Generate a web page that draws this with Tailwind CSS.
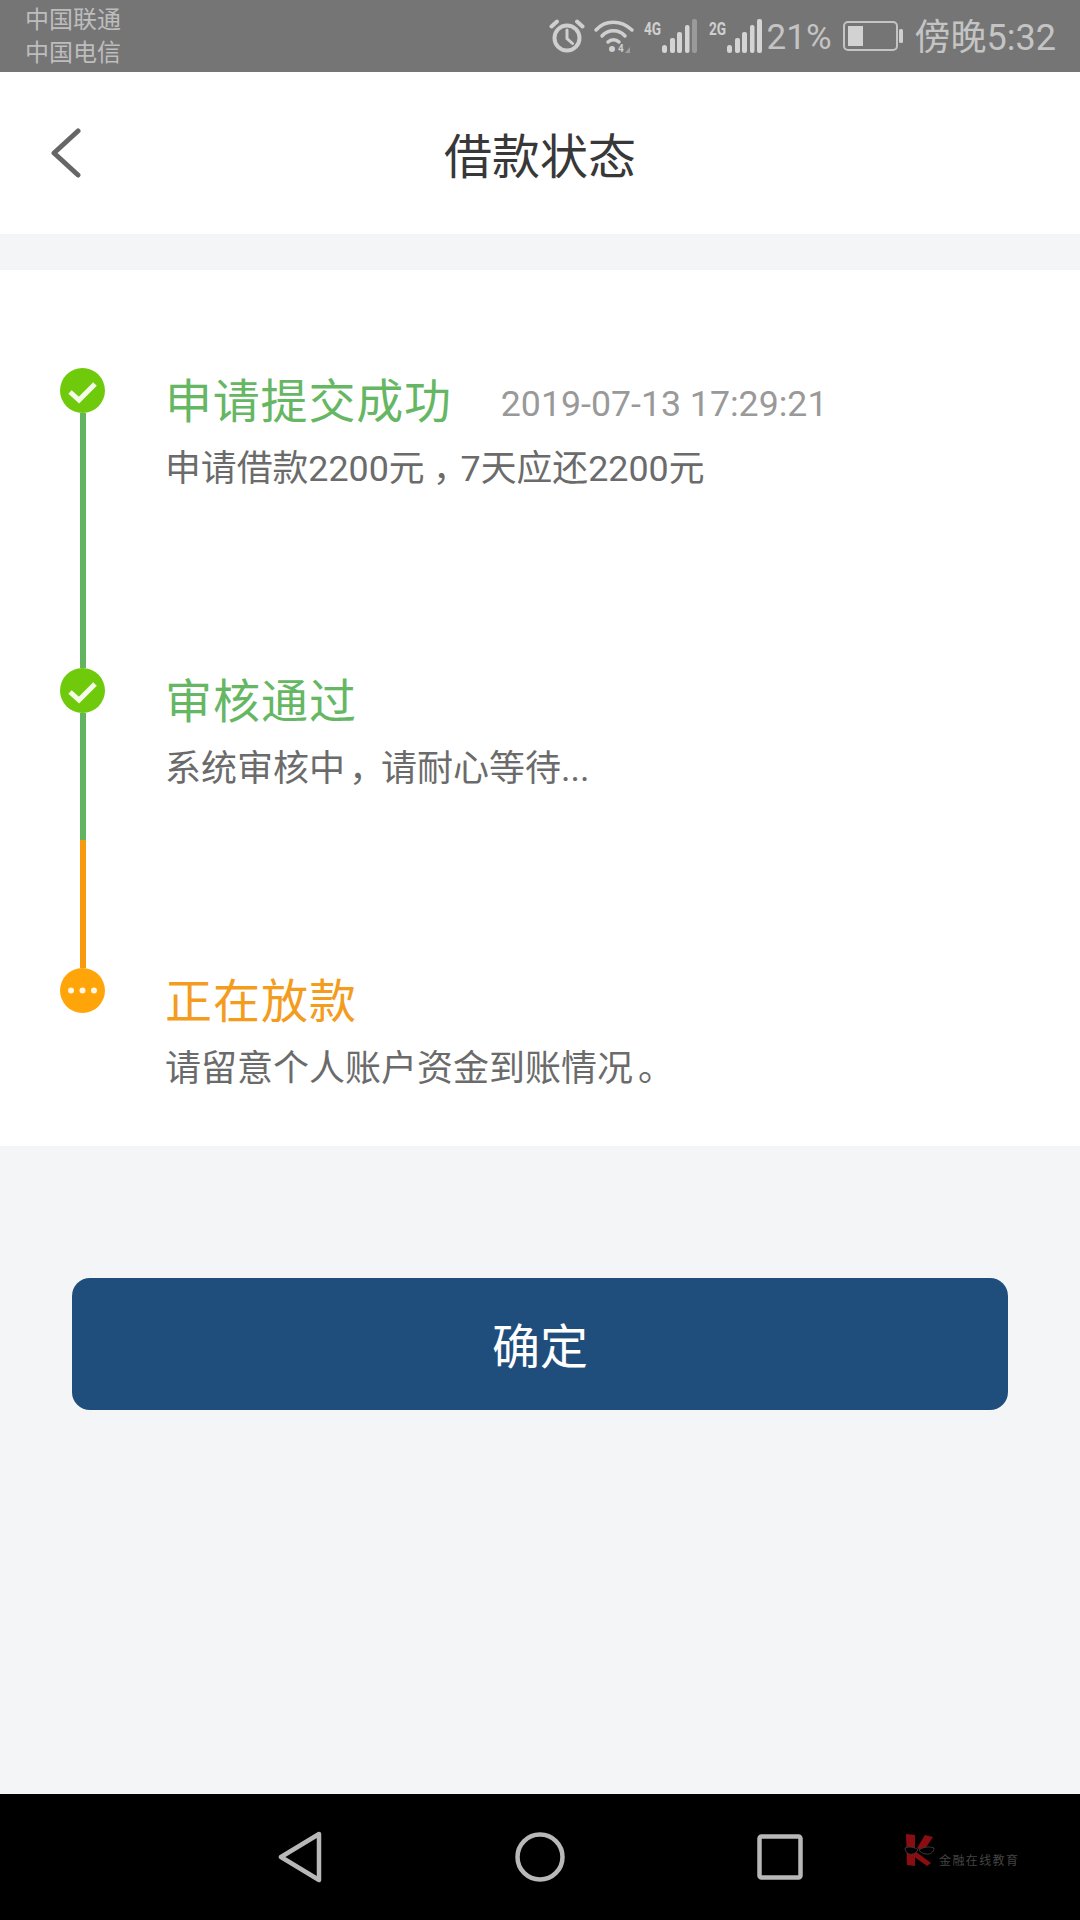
<!DOCTYPE html>
<html lang="zh-CN">
<head>
<meta charset="utf-8">
<title>借款状态</title>
<script src="https://cdn.jsdelivr.net/npm/@tailwindcss/browser@4"></script>
</head>
<body class="m-0">
<div class="w-[1080px] h-[1920px] flex flex-col bg-[#f3f5f7] overflow-hidden font-['Roboto','Noto_Sans_CJK_SC',sans-serif]">

  <!-- status bar -->
  <div class="h-[72px] shrink-0 bg-[#757575] flex justify-between text-[#c4c4c4]">
    <div class="pl-[25px] pt-[4px] text-[24px] leading-[33px] text-[#bdbdbd]">
      <div>中国联通</div>
      <div>中国电信</div>
    </div>
    <div class="flex items-center pr-[24px]">
      <svg class="w-[36px] h-[36px]" viewBox="0 0 36 36" fill="none" stroke="#cfcfcf" stroke-width="4" stroke-linecap="round">
        <circle cx="18" cy="20" r="12.5"/>
        <path d="M18 12v8.5l5.5 5" stroke-width="3"/>
        <path d="M2.5 8.5L8 3.5M33.5 8.5L28 3.5"/>
      </svg>
      <svg class="w-[40px] h-[36px] ml-[9px] overflow-visible" viewBox="0 0 40 36" fill="none" stroke="#cfcfcf" stroke-width="3.5" stroke-linecap="round">
        <path d="M2 12C11 1.500 27 1.500 38 12"/>
        <path d="M8 18C14 11 25 11 31 18"/>
        <path d="M14 24C17 21 22 21 25 24"/>
        <circle cx="18" cy="31" r="3" fill="#cfcfcf" stroke="none"/>
        <text x="24" y="34" font-size="10" font-weight="700" fill="#cfcfcf" stroke="none" font-family="Roboto">4</text>
        <path d="M31 35l5-6v6z" fill="#a0a0a0" stroke="none"/>
      </svg>
      <div class="w-[18px] ml-[10px] mb-[16px] text-[19px] leading-[19px] font-bold text-[#cfcfcf] scale-x-[0.72] origin-left whitespace-nowrap">4G</div>
      <svg class="w-[35px] h-[36px]" viewBox="0 0 35 36">
        <g fill="#d4d4d4">
          <rect x="0" y="27" width="5" height="8" rx="2.500"/>
          <rect x="8" y="20" width="5" height="15" rx="2"/>
          <rect x="15" y="14" width="5" height="21" rx="2"/>
          <rect x="23" y="7" width="4.500" height="28" rx="2"/>
        </g>
        <rect x="30" y="1" width="5" height="34" rx="2" fill="#9a9a9a"/>
      </svg>
      <div class="w-[18px] ml-[12px] mb-[16px] text-[19px] leading-[19px] font-bold text-[#cfcfcf] scale-x-[0.72] origin-left whitespace-nowrap">2G</div>
      <svg class="w-[35px] h-[36px]" viewBox="0 0 35 36" fill="#d4d4d4">
        <rect x="0" y="27" width="5" height="8" rx="2.500"/>
        <rect x="8" y="20" width="5" height="15" rx="2"/>
        <rect x="15" y="14" width="5" height="21" rx="2"/>
        <rect x="23" y="7" width="4.500" height="28" rx="2"/>
        <rect x="30" y="1" width="5" height="34" rx="2"/>
      </svg>
      <div class="ml-[5px] mt-[4px] text-[35px] leading-[40px]">21%</div>
      <svg class="w-[60px] h-[30px] ml-[11px]" viewBox="0 0 60 30" fill="none">
        <rect x="1" y="1" width="53" height="28" rx="4" stroke="#c4c4c4" stroke-width="2"/>
        <rect x="5" y="5" width="15" height="20" fill="#d2d2d2"/>
        <rect x="56" y="8" width="4" height="14" rx="1.500" fill="#cfcfcf"/>
      </svg>
      <div class="ml-[12px] mt-[4px] text-[36px] leading-[40px]">傍晚5:32</div>
    </div>
  </div>

  <!-- header -->
  <div class="h-[162px] shrink-0 bg-white relative flex items-center justify-center">
    <svg class="absolute left-[50px] top-[56px] w-[34px] h-[50px]" viewBox="0 0 34 50" fill="none" stroke="#666666" stroke-width="5" stroke-linecap="round" stroke-linejoin="round">
      <path d="M28 3L4 25L28 47"/>
    </svg>
    <div class="pt-[9px] text-[48px] leading-[56px] text-[#383838]">借款状态</div>
  </div>

  <!-- timeline card -->
  <div class="mt-[36px] h-[876px] shrink-0 bg-white pt-[98px]">
    <!-- step 1 -->
    <div class="flex h-[300px]">
      <div class="w-[165px] shrink-0 pl-[60px] flex flex-col">
        <svg class="w-[45px] h-[45px] shrink-0" viewBox="0 0 45 45">
          <circle cx="22.500" cy="22.500" r="22.500" fill="#6fca0b"/>
          <path d="M10 24l9 8L35 16" fill="none" stroke="#f4fbe8" stroke-width="5"/>
        </svg>
        <div class="w-[6px] ml-[20px] flex-1 bg-[#63b45f]"></div>
      </div>
      <div class="pt-[6px]">
        <div class="flex items-start h-[56px]">
          <div class="text-[47px] leading-[56px] text-[#66b763] tracking-[0.8px]">申请提交成功</div>
          <div class="ml-[49px] mt-[4px] text-[35.7px] leading-[52px] text-[#999999] whitespace-nowrap">2019-07-13 17:29:21</div>
        </div>
        <div class="mt-[17px] text-[35.85px] leading-[44px] text-[#6b6b6b] whitespace-nowrap">申请借款2200元<span class="ml-[8px] tracking-[-8px]">，</span>7天应还2200元</div>
      </div>
    </div>
    <!-- step 2 -->
    <div class="flex h-[300px]">
      <div class="w-[165px] shrink-0 pl-[60px] flex flex-col">
        <svg class="w-[45px] h-[45px] shrink-0" viewBox="0 0 45 45">
          <circle cx="22.500" cy="22.500" r="22.500" fill="#6fca0b"/>
          <path d="M10 24l9 8L35 16" fill="none" stroke="#f4fbe8" stroke-width="5"/>
        </svg>
        <div class="w-[6px] ml-[20px] h-[127px] bg-[#63b45f]"></div>
        <div class="w-[6px] ml-[20px] flex-1 bg-[#f79a10]"></div>
      </div>
      <div class="pt-[6px]">
        <div class="text-[47px] leading-[56px] text-[#66b763] tracking-[1px]">审核通过</div>
        <div class="mt-[17px] text-[36px] leading-[44px] text-[#6b6b6b] whitespace-nowrap">系统审核中<span class="ml-[4px] tracking-[-4px]">，</span>请耐心等待...</div>
      </div>
    </div>
    <!-- step 3 -->
    <div class="flex h-[178px]">
      <div class="w-[165px] shrink-0 pl-[60px]">
        <svg class="w-[45px] h-[45px]" viewBox="0 0 45 45">
          <circle cx="22.500" cy="22.500" r="22.500" fill="#ffa50a"/>
          <circle cx="11" cy="22.500" r="3" fill="#fff6e5"/>
          <circle cx="22.500" cy="22.500" r="3" fill="#fff6e5"/>
          <circle cx="34" cy="22.500" r="3" fill="#fff6e5"/>
        </svg>
      </div>
      <div class="pt-[6px]">
        <div class="text-[47px] leading-[56px] text-[#f39c1e] tracking-[1px]">正在放款</div>
        <div class="mt-[17px] text-[36px] leading-[44px] text-[#6b6b6b] whitespace-nowrap">请留意个人账户资金到账情况<span class="ml-[5px]">。</span></div>
      </div>
    </div>
  </div>

  <!-- button -->
  <div class="mt-[132px] mx-[72px] h-[132px] shrink-0 rounded-[18px] bg-[#1f4e7c] flex items-center justify-center pt-[7px] text-[48px] text-white">确定</div>

  <div class="flex-1"></div>

  <!-- nav bar -->
  <div class="h-[126px] shrink-0 bg-black relative pl-[180px] grid grid-cols-[240px_240px_240px] items-center justify-items-center">
    <svg class="w-[44px] h-[52px]" viewBox="0 0 44 52" fill="none" stroke="#b8b8b8" stroke-width="4.500" stroke-linejoin="round">
      <path d="M41 3L3 26L41 49Z"/>
    </svg>
    <svg class="w-[50px] h-[50px]" viewBox="0 0 50 50" fill="none" stroke="#b8b8b8" stroke-width="4.500">
      <circle cx="25" cy="25" r="22.500"/>
    </svg>
    <svg class="w-[46px] h-[46px]" viewBox="0 0 46 46" fill="none" stroke="#b8b8b8" stroke-width="4.500" stroke-linejoin="round">
      <rect x="2.500" y="2.500" width="41" height="41" rx="2"/>
    </svg>
    <!-- watermark -->
    <div class="absolute left-[904px] top-[39px] flex items-end">
      <svg class="w-[32px] h-[34px]" viewBox="0 0 32 34">
        <path d="M2 1L11 2L11 33L3 32Z" fill="#8a0d12"/>
        <path d="M21 2L29 4L19 19L13 15Z" fill="#8a0d12"/>
        <path d="M11 18L27 30L23 33L9 23Z" fill="#8a0d12"/>
        <path d="M1 15C5 13 11 14 14 17C12 20 9 22 5 21C2 20 1 17 1 15ZM15 17C19 14 25 13 30 15C30 19 26 22 22 21C19 21 16 19 15 17Z" fill="#000000" stroke="#3a3a3a" stroke-width="1"/>
      </svg>
      <div class="ml-[3px] mb-[-1px] text-[12px] leading-[13px] tracking-[1.4px] text-[#444444] whitespace-nowrap">金融在线教育</div>
    </div>
  </div>
</div>
</body>
</html>
